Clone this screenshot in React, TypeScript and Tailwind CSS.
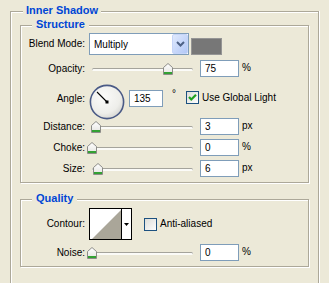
import React from "react";

const font = { fontFamily: '"Liberation Sans", Arial, sans-serif' };

function Thumb({ left }: { left: number }) {
  return (
    <svg width="10" height="12" className="absolute top-[3px]" style={{ left }}>
      <defs>
        <linearGradient id="tg" x1="0" y1="0" x2="0" y2="1">
          <stop offset="0" stopColor="#ffffff" />
          <stop offset="1" stopColor="#e4e4e0" />
        </linearGradient>
      </defs>
      <path d="M0.5 4.5 L5 0.5 L9.5 4.5 V11.5 H0.5 Z" fill="url(#tg)" stroke="#8c8c88" />
      <rect x="1" y="9" width="8" height="2" fill="#33a133" />
    </svg>
  );
}

function Slider({ left }: { left: number }) {
  return (
    <div className="relative w-[106px] h-[17px] ml-[2px]">
      <div className="absolute left-[5px] right-0 top-[8px] h-[3px] rounded-full bg-[#fbfbf8] shadow-[inset_0_1px_0_#a5a49c]" />
      <Thumb left={left} />
    </div>
  );
}

function Field({ value, w = 39 }: { value: string; w?: number }) {
  return (
    <div
      className="h-[17px] border border-[#7F9DB9] bg-white pl-[4px] flex items-center text-[10px] text-black"
      style={{ width: w }}
    >
      {value}
    </div>
  );
}

function Label({ children }: { children: React.ReactNode }) {
  return <div className="w-[64px] text-right text-[10px] text-black leading-[12px]">{children}</div>;
}

function SliderRow({ label, thumb, value, unit, className = "" }: { label: string; thumb: number; value: string; unit: string; className?: string }) {
  return (
    <div className={"flex items-center h-[17px] " + className}>
      <Label>{label}</Label>
      <Slider left={thumb} />
      <div className="ml-[7px]">
        <Field value={value} />
      </div>
      <div className="ml-[3px] text-[10px] text-black leading-[12px] -mt-[2px]">{unit}</div>
    </div>
  );
}

function Check({ checked }: { checked: boolean }) {
  return (
    <svg width="13" height="13">
      <defs>
        <linearGradient id="cg" x1="0" y1="0" x2="1" y2="1">
          <stop offset="0" stopColor="#dcdcd7" />
          <stop offset="1" stopColor="#ffffff" />
        </linearGradient>
      </defs>
      <rect x="0.5" y="0.5" width="12" height="12" fill="url(#cg)" stroke="#1C5180" />
      {checked && <path d="M3 6 L5.3 8.5 L10 3.8" fill="none" stroke="#21A121" strokeWidth="2.2" />}
    </svg>
  );
}

function Group({ title, className = "", children }: { title: string; className?: string; children?: React.ReactNode }) {
  return (
    <div className={"relative border border-[#ACA899] shadow-[inset_1px_1px_0_#fff,1px_1px_0_#fff] " + className}>
      <div className="absolute left-[11px] -top-[8px] px-[4px] bg-[#ECE9D8] text-[11px] leading-[13px] font-bold text-[#0046D5]">
        {title}
      </div>
      {children}
    </div>
  );
}

export default function App() {
  return (
    <div className="w-[329px] h-[283px] bg-[#ECE9D8] overflow-hidden pl-[10px] pt-[11px]" style={font}>
      <div className="relative w-[309px] h-[300px] border border-b-0 border-[#ACA899] shadow-[inset_1px_1px_0_#fff,1px_0_0_#fff] pl-[9px] pt-[13px]">
        <div className="absolute left-[12px] -top-[8px] px-[3px] bg-[#ECE9D8] text-[11px] leading-[13px] font-bold text-[#0046D5]">
          Inner Shadow
        </div>

        <Group title="Structure" className="w-[289px] h-[158px]">
          <div className="flex flex-col pt-[7px]">
            <div className="flex items-center h-[22px]">
              <Label>Blend Mode:</Label>
              <div className="ml-[4px] w-[100px] h-[22px] border border-[#7F9DB9] bg-white flex items-center">
                <span className="pl-[4px] flex-1 text-[10px] text-black">Multiply</span>
                <div className="w-[16px] h-[20px] rounded-[2px] bg-gradient-to-br from-[#dfe9fd] to-[#b3c8f6] border border-[#c6d5f8] flex items-center justify-center">
                  <svg width="9" height="6">
                    <path d="M1 1 L4.5 4.5 L8 1" fill="none" stroke="#4D6185" strokeWidth="2" />
                  </svg>
                </div>
              </div>
              <div className="ml-[2px] mt-[4px] w-[31px] h-[17px] bg-[#777777] border border-[#959595]" />
            </div>

            <SliderRow label="Opacity:" thumb={76} value="75" unit="%" className="mt-[5px]" />

            <div className="flex items-start h-[34px] mt-[7px]">
              <div className="mt-[6px] flex items-center h-[17px]">
                <Label>Angle:</Label>
              </div>
              <svg width="36" height="36" className="ml-[4px] shrink-0">
                <defs>
                  <radialGradient id="dg" cx="0.4" cy="0.35" r="0.7">
                    <stop offset="0" stopColor="#fbfbfa" />
                    <stop offset="0.7" stopColor="#eeeeea" />
                    <stop offset="1" stopColor="#d4d4d0" />
                  </radialGradient>
                </defs>
                <circle cx="18" cy="18" r="16.6" fill="url(#dg)" stroke="#4a5a86" strokeWidth="1.6" />
                <line x1="18" y1="18" x2="8" y2="8" stroke="#000" strokeWidth="1.1" />
                <rect x="16.5" y="16.5" width="3" height="3" fill="#000" />
              </svg>
              <div className="ml-[4px] mt-[6px]">
                <Field value="135" w={34} />
              </div>
              <div className="ml-[9px] mt-[4px] text-[10px] text-black leading-[12px]">°</div>
              <div className="ml-[10px] mt-[7px] flex items-center">
                <Check checked />
                <span className="ml-[3px] text-[10px] text-black leading-[12px]">Use Global Light</span>
              </div>
            </div>

            <SliderRow label="Distance:" thumb={4} value="3" unit="px" />
            <SliderRow label="Choke:" thumb={0} value="0" unit="%" className="mt-[4px]" />
            <SliderRow label="Size:" thumb={6} value="6" unit="px" className="mt-[4px]" />
          </div>
        </Group>

        <Group title="Quality" className="w-[289px] h-[68px] mt-[16px]">
          <div className="flex flex-col pt-[8px]">
            <div className="flex items-center h-[32px]">
              <Label>Contour:</Label>
              <div className="ml-[4px] w-[43px] h-[32px] border border-black flex bg-white">
                <svg width="31" height="30" className="shrink-0">
                  <rect x="0" y="0" width="31" height="30" fill="#ffffff" />
                  <polygon points="2,30 31,1 31,30" fill="#aaa699" />
                </svg>
                <div className="w-[1px] bg-black" />
                <div className="flex-1 flex items-center justify-center bg-white">
                  <svg width="5" height="3">
                    <polygon points="0,0 5,0 2.5,3" fill="#000" />
                  </svg>
                </div>
              </div>
              <div className="ml-[12px] flex items-center">
                <Check checked={false} />
                <span className="ml-[3px] text-[10px] text-black leading-[12px]">Anti-aliased</span>
              </div>
            </div>
            <SliderRow label="Noise:" thumb={0} value="0" unit="%" className="mt-[4px]" />
          </div>
        </Group>
      </div>
    </div>
  );
}
